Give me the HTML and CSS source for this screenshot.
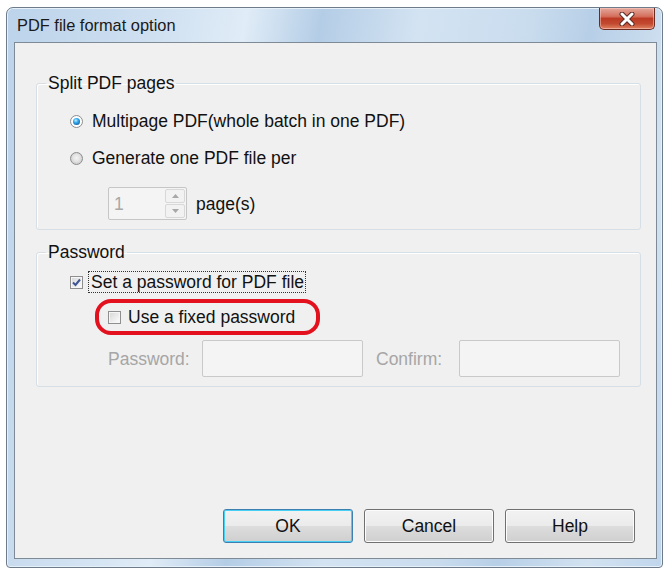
FILE: index.html
```html
<!DOCTYPE html>
<html lang="en">
<head>
    <meta charset="UTF-8">
    <title>PDF file format option</title>
    <link rel="stylesheet" href="styles.css">
</head>
<body>
    <div class="window">
        <div class="titlebar">
            <span class="title">PDF file format option</span>
            <div class="close">
                <svg width="20" height="14" viewBox="0 0 20 14">
                    <path d="M5 2 L15 12 M15 2 L5 12" stroke="#5b2a22" stroke-width="5" stroke-linecap="round"/>
                    <path d="M5 2 L15 12 M15 2 L5 12" stroke="#ffffff" stroke-width="3" stroke-linecap="round"/>
                </svg>
            </div>
        </div>

        <div class="client">
            <fieldset class="group split">
                <legend>Split PDF pages</legend>
                <div class="row">
                    <span class="radio on"></span>
                    <span>Multipage PDF(whole batch in one PDF)</span>
                </div>
                <div class="row second">
                    <span class="radio"></span>
                    <span>Generate one PDF file per</span>
                </div>
                <div class="row spin-row">
                    <div class="spinner">
                        <span class="value">1</span>
                        <div class="arrows">
                            <div class="arrow"><svg width="7" height="4" viewBox="0 0 7 4"><path d="M0 4 L3.5 0 L7 4 Z" fill="#a8a8a8"/></svg></div>
                            <div class="arrow"><svg width="7" height="4" viewBox="0 0 7 4"><path d="M0 0 L3.5 4 L7 0 Z" fill="#a8a8a8"/></svg></div>
                        </div>
                    </div>
                    <span>page(s)</span>
                </div>
            </fieldset>

            <fieldset class="group password">
                <legend>Password</legend>
                <div class="row">
                    <span class="check">
                        <svg width="11" height="11" viewBox="0 0 11 11"><path d="M2 5.5 L4.5 8 L9 2.5" stroke="#3f5595" stroke-width="2" fill="none"/></svg>
                    </span>
                    <span class="focus">Set a password for PDF file</span>
                </div>
                <div class="row mark-row">
                    <div class="mark">
                        <span class="check"></span>
                        <span>Use a fixed password</span>
                    </div>
                </div>
                <div class="row fields">
                    <span class="lbl pw-lbl">Password:</span>
                    <div class="field"></div>
                    <span class="lbl cf-lbl">Confirm:</span>
                    <div class="field"></div>
                </div>
            </fieldset>

            <div class="buttons">
                <div class="btn default">OK</div>
                <div class="btn">Cancel</div>
                <div class="btn">Help</div>
            </div>
        </div>
    </div>
</body>
</html>
```

FILE: styles.css
```css
body {
    margin: 0;
    background-color: #fff;
    font-family: 'Liberation Sans', Arial, sans-serif;
    color: #000;
}
.window {
    box-sizing: border-box;
    width: 657px;
    height: 561px;
    margin: 7px 0 0 6px;
    padding: 0 5px 8px 7px;
    border: 1px solid #6d7b8a;
    border-radius: 7px 7px 4px 4px;
    background: linear-gradient(100deg, #bcd3ea 0%, #cfe0f1 20%, #e0ecf7 32%, #b4cde6 42%, #d3e3f2 55%, #c9dcee 70%, #b7cfe7 78%, #d2e2f1 90%, #c0d6ec 100%);
    box-shadow: inset 0 0 0 1px #e6f0f9;
    display: flex;
    flex-direction: column;
}
.titlebar {
    height: 34px;
    display: flex;
    align-items: center;
}
.title {
    padding-left: 3px;
    font-size: 16.4px;
    color: #1a1a1a;
}
.close {
    margin-left: auto;
    margin-right: 2px;
    align-self: flex-start;
    width: 54px;
    height: 21px;
    border: 1px solid #6b2b21;
    border-top: none;
    border-radius: 0 0 5px 5px;
    background: linear-gradient(#e4a89c 0%, #d46f5c 40%, #bd3a24 50%, #c24a30 75%, #e08463 100%);
    box-shadow: inset 0 0 0 1px rgba(255, 210, 200, 0.5);
    display: flex;
    align-items: center;
    justify-content: center;
}
.client {
    box-sizing: border-box;
    width: 643px;
    height: 517px;
    border: 1px solid #7e8a96;
    background-color: #f0f0f0;
    padding: 30px 15px 15px 21px;
    display: flex;
    flex-direction: column;
    font-size: 17.5px;
    color: #111;
}
.group {
    margin: 0;
    border: 1px solid #d5dfe5;
    border-radius: 3px;
    box-shadow: inset 1px 1px 0 #fff;
    padding: 0 0 9px 9px;
    min-width: 0;
}
.group legend {
    padding: 0 2px;
    line-height: 20px;
}
.row {
    display: flex;
    align-items: center;
    line-height: 20px;
    padding-left: 24px;
}
.split .row:first-of-type {
    margin-top: 18px;
}
.split .second {
    margin-top: 17px;
}
.spin-row {
    margin-top: 19px;
    padding-left: 62px;
}
.radio {
    box-sizing: border-box;
    width: 13px;
    height: 13px;
    margin-right: 9px;
    border-radius: 50%;
    border: 1px solid #8c8c8c;
    background: radial-gradient(circle at 50% 45%, #f4f4f4 0%, #e2e2e2 45%, #cfcfcf 70%, #fbfbfb 100%);
    position: relative;
}
.radio.on {
    background: #fff;
}
.radio.on::after {
    content: '';
    position: absolute;
    left: 2px;
    top: 2px;
    width: 7px;
    height: 7px;
    border-radius: 50%;
    background: radial-gradient(circle at 40% 35%, #c8ecff 0%, #38aef0 35%, #125e9e 80%);
}
.spinner {
    box-sizing: border-box;
    width: 79px;
    height: 33px;
    border: 1px solid #c6c6c6;
    border-radius: 2px;
    background-color: #f4f4f4;
    display: flex;
    align-items: center;
    margin-right: 9px;
}
.spinner .value {
    padding-left: 5px;
    color: #a8a8a8;
    flex: 1;
}
.arrows {
    width: 21px;
    height: 100%;
    display: flex;
    flex-direction: column;
    gap: 1px;
    padding: 1px 1px 1px 0;
    box-sizing: border-box;
}
.arrow {
    flex: 1;
    border: 1px solid #d8d8d8;
    border-radius: 2px;
    background-color: #f2f2f2;
    display: flex;
    align-items: center;
    justify-content: center;
}
.group.password {
    margin-top: 12px;
}
.password .row:first-of-type {
    margin-top: 9px;
}
.check {
    box-sizing: border-box;
    width: 13px;
    height: 13px;
    border: 1px solid #8f8f8f;
    background: linear-gradient(135deg, #d6d6d6 0%, #f2f2f2 70%, #fff 100%);
    box-shadow: inset 0 0 0 1px #f6f6f6;
    display: flex;
    align-items: center;
    justify-content: center;
    margin-right: 5px;
}
.check svg {
    display: block;
}
.focus {
    border: 1px dotted #333;
    padding: 0 1px 0 2px;
}
.mark-row {
    margin-top: 6px;
    padding-left: 49px;
}
.mark {
    display: flex;
    align-items: center;
    height: 28px;
    padding: 0 21px 0 9px;
    border: 4px solid #e3101e;
    border-radius: 16px;
}
.mark .check {
    margin-right: 7px;
}
.fields {
    margin-top: 5px;
    padding-left: 62px;
}
.lbl {
    color: #a6a6a6;
}
.pw-lbl {
    width: 94px;
}
.cf-lbl {
    width: 83px;
    margin-left: 13px;
}
.field {
    box-sizing: border-box;
    width: 161px;
    height: 37px;
    border: 1px solid #c9c9c9;
    border-radius: 2px;
    background-color: #f4f4f4;
}
.buttons {
    margin-top: auto;
    display: flex;
    justify-content: flex-end;
    gap: 11px;
    padding-right: 6px;
}
.btn {
    box-sizing: border-box;
    width: 130px;
    height: 34px;
    border: 1px solid #707070;
    border-radius: 3px;
    background: linear-gradient(#f2f2f2 0%, #ebebeb 49%, #dddddd 50%, #cfcfcf 100%);
    box-shadow: inset 0 0 0 1px #fcfcfc;
    display: flex;
    align-items: center;
    justify-content: center;
}
.btn.default {
    border-color: #3c7fb1;
    box-shadow: inset 0 0 0 1px #48d0f4;
}
```
